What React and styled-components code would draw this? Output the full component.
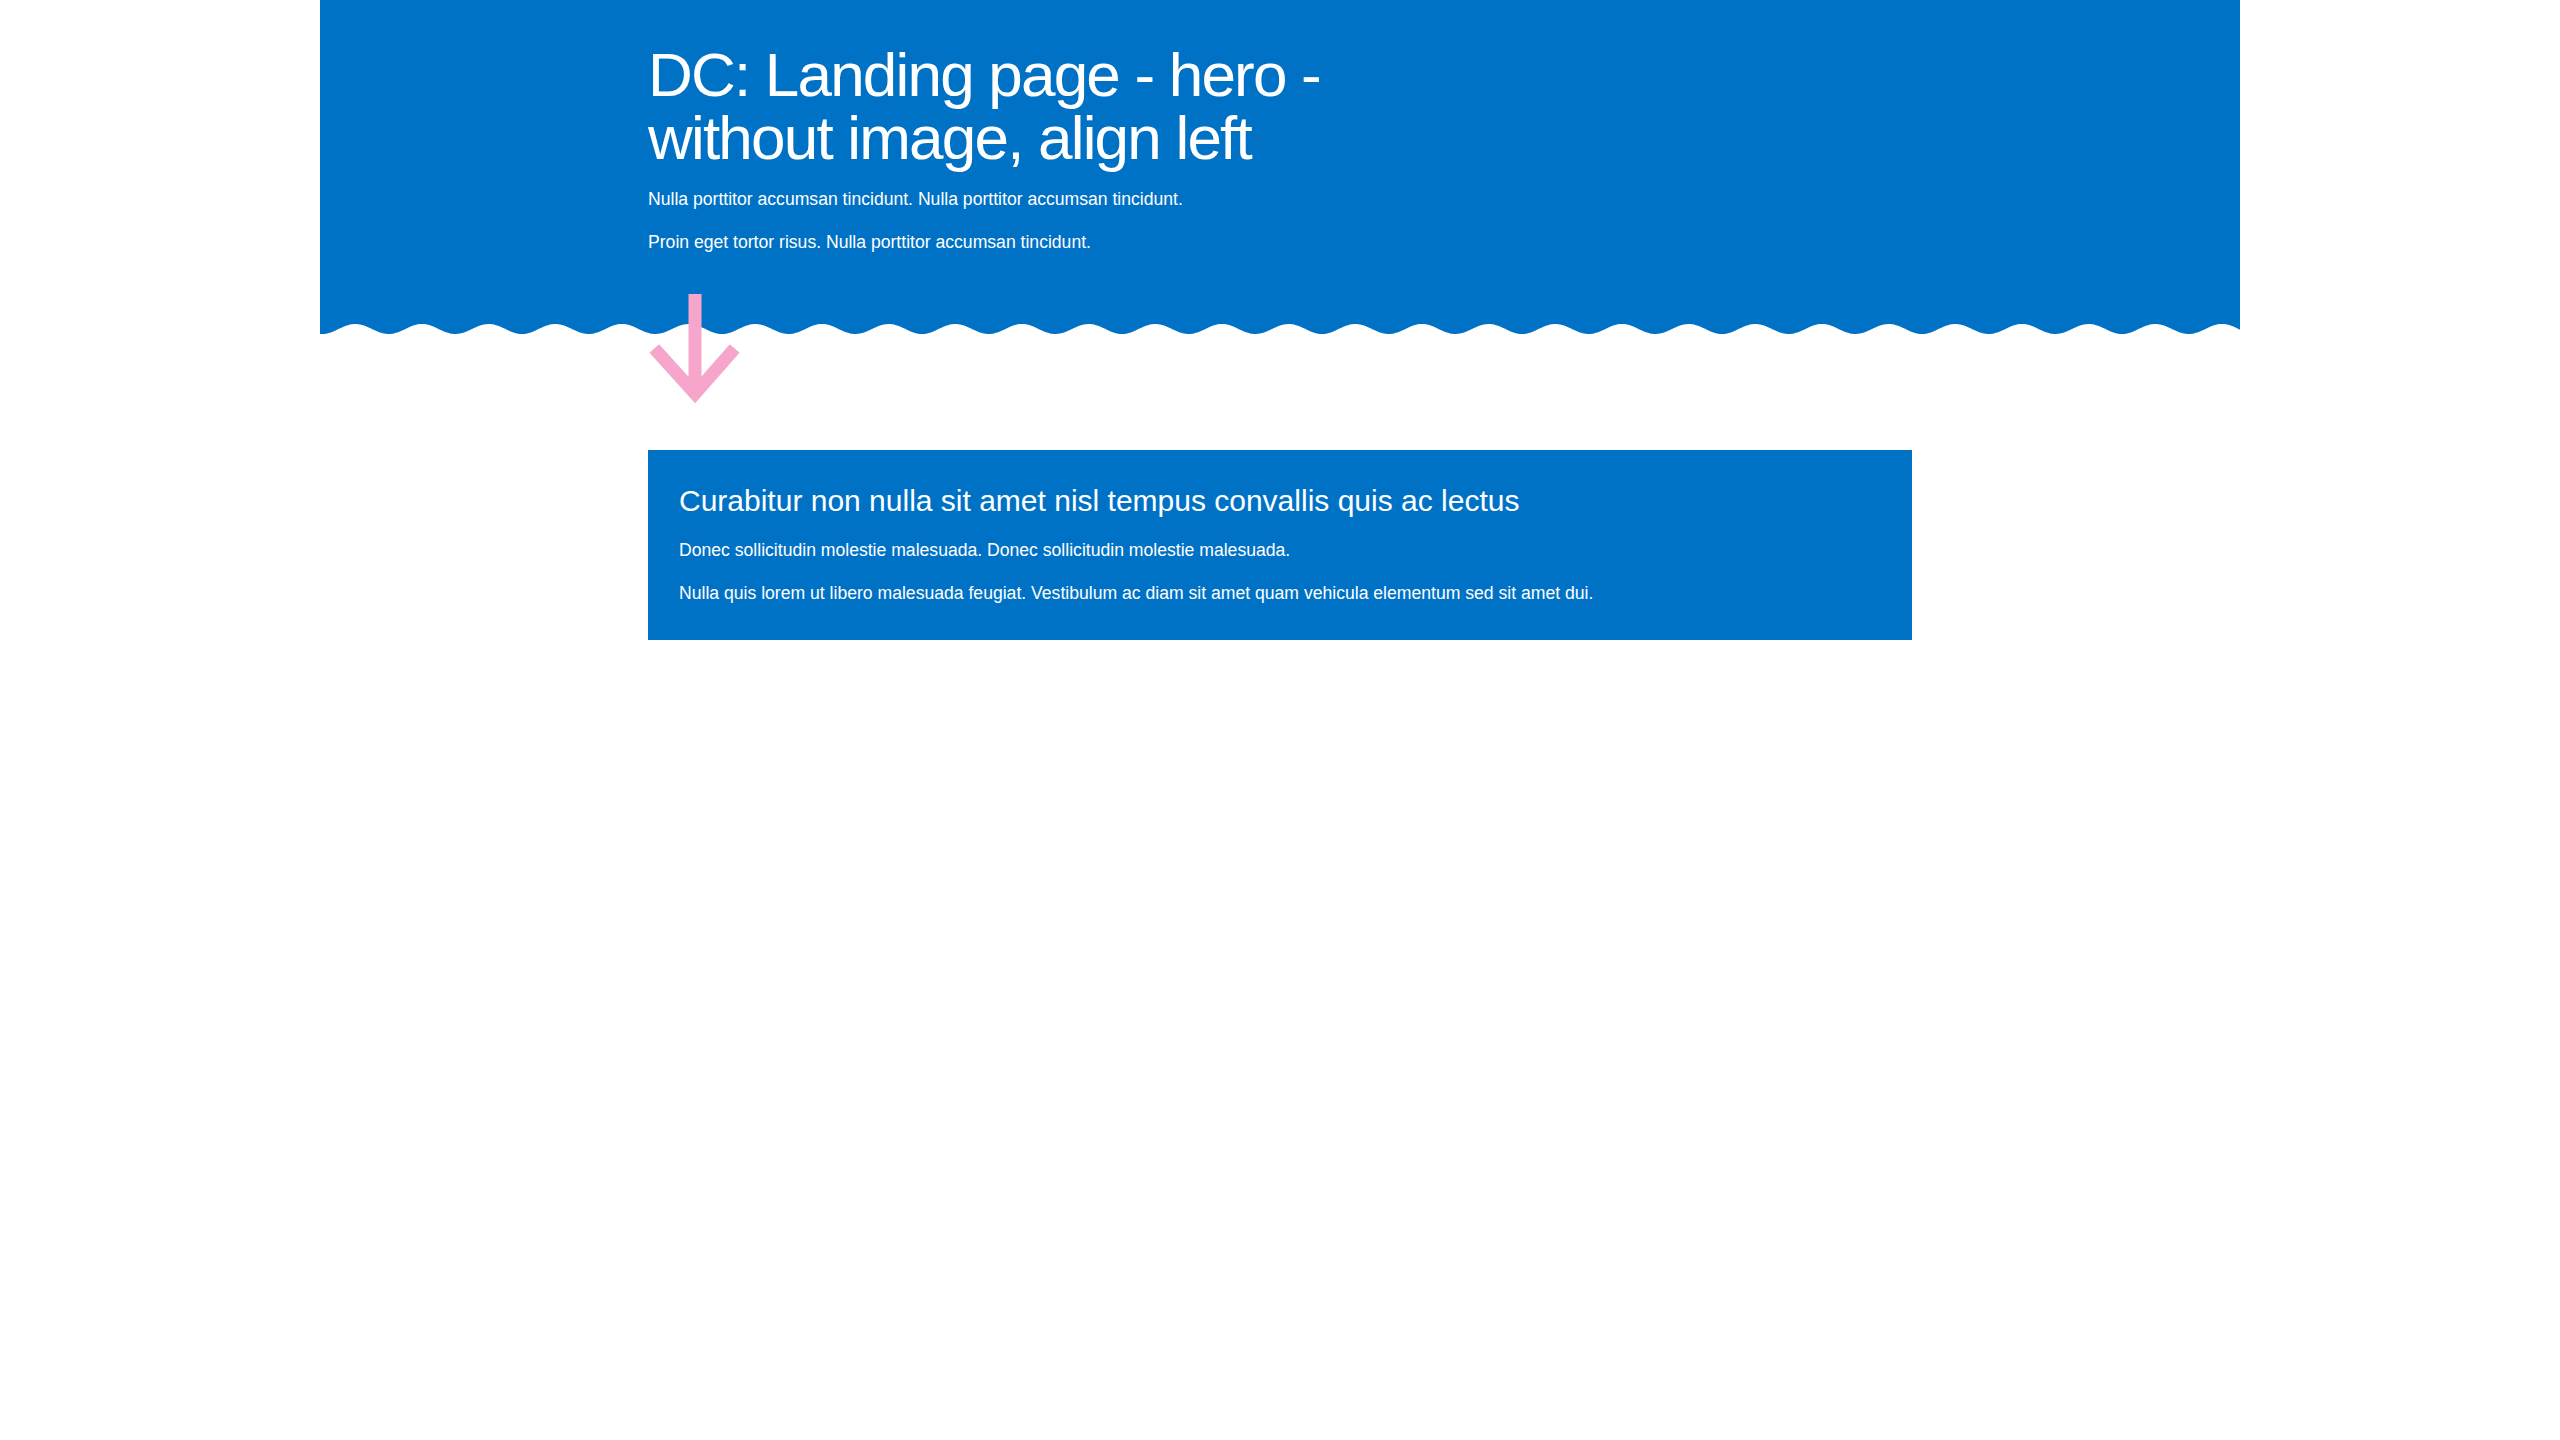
import React from 'react';
import styled, { createGlobalStyle } from 'styled-components';

const BLUE = '#0072c6';
const PINK = '#f5a6ca';

const GlobalStyle = createGlobalStyle`
  body {
    margin: 0;
    background: #ffffff;
    font-family: "Liberation Sans", Arial, sans-serif;
  }
`;

const Page = styled.div`
  width: 1920px;
  margin: 0 auto;
`;

const Hero = styled.section`
  background: ${BLUE};
  color: #ffffff;
  padding: 43px 0 68px;
`;

const Inner = styled.div`
  width: 1264px;
  margin: 0 auto;
`;

const Title = styled.h1`
  margin: 0 0 17px;
  width: 720px;
  font-size: 62px;
  line-height: 63px;
  font-weight: 400;
  letter-spacing: -1.8px;
`;

const Text = styled.p`
  margin: 0 0 16px;
  font-size: 17.6px;
  line-height: 27px;
  color: #ffffff;

  &:last-child {
    margin-bottom: 0;
  }
`;

const WaveSvg = styled.svg`
  display: block;
  width: 1920px;
  height: 10px;
`;

const ArrowRow = styled(Inner)`
  margin-top: -42px;
  position: relative;
  left: -3px;
`;

const ArrowSvg = styled.svg`
  display: block;
  width: 100px;
  height: 114px;
`;

const Content = styled(Inner)`
  margin-top: 44px;
`;

const Card = styled.div`
  background: ${BLUE};
  color: #ffffff;
  padding: 33px 31px 33px;
`;

const CardTitle = styled.h2`
  margin: 0 0 18px;
  font-size: 30px;
  line-height: 36px;
  font-weight: 400;
`;

// sine edge along the bottom of the hero
const wavePath = () => {
  const period = 200 / 3;
  let d = 'M0 0';
  for (let x = 0; x <= 1920; x += 2) {
    const y = 5 + 5 * Math.cos((2 * Math.PI * (x - 2)) / period);
    d += ` L${x} ${y.toFixed(2)}`;
  }
  return d + ' L1920 0 Z';
};

const Wave = () => (
  <WaveSvg viewBox="0 0 1920 10" preserveAspectRatio="none">
    <path d={wavePath()} fill={BLUE} />
  </WaveSvg>
);

const DownArrow = () => (
  <ArrowSvg viewBox="0 0 100 114">
    <path
      d="M50 2 V101 M9.3 56.5 L50 101.5 L89.7 56.5"
      fill="none"
      stroke={PINK}
      strokeWidth="13"
      strokeLinejoin="miter"
      strokeMiterlimit="4"
    />
  </ArrowSvg>
);

const App = () => {
  return (
    <Page>
      <GlobalStyle />
      <Hero>
        <Inner>
          <Title>DC: Landing page - hero - without image, align left</Title>
          <Text>Nulla porttitor accumsan tincidunt. Nulla porttitor accumsan tincidunt.</Text>
          <Text>Proin eget tortor risus. Nulla porttitor accumsan tincidunt.</Text>
        </Inner>
      </Hero>
      <Wave />
      <ArrowRow>
        <DownArrow />
      </ArrowRow>
      <Content>
        <Card>
          <CardTitle>Curabitur non nulla sit amet nisl tempus convallis quis ac lectus</CardTitle>
          <Text>Donec sollicitudin molestie malesuada. Donec sollicitudin molestie malesuada.</Text>
          <Text>Nulla quis lorem ut libero malesuada feugiat. Vestibulum ac diam sit amet quam vehicula elementum sed sit amet dui.</Text>
        </Card>
      </Content>
    </Page>
  );
};

export default App;
